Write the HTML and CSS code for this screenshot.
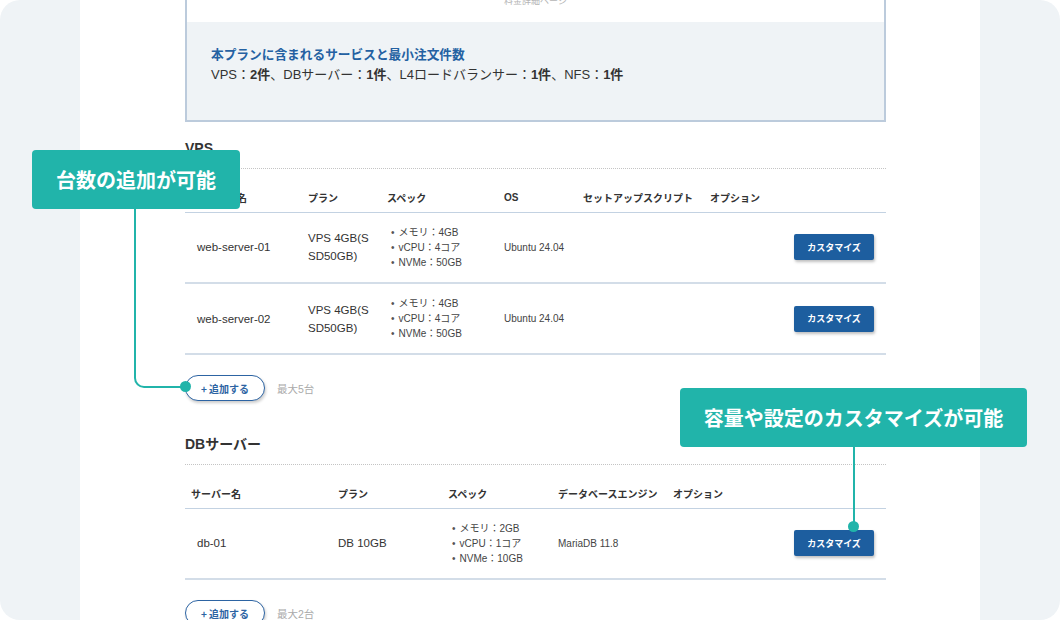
FILE: index.html
```html
<!DOCTYPE html>
<html lang="ja">

<head>
  <meta charset="UTF-8" />
  <title>プラン構成</title>
  <meta name="viewport" content="width=device-width, initial-scale=1.0">
  <link rel="stylesheet" href="styles.css">
</head>

<body>
  <div class="frame">
    <div class="panel">

      <!-- Plan summary -->
      <div class="plan-box">
        <div class="plan-top">料金詳細ページ</div>
        <div class="plan-body">
          <p class="plan-title">本プランに含まれるサービスと最小注文件数</p>
          <p class="plan-text">VPS：<b>2件</b>、DBサーバー：<b>1件</b>、L4ロードバランサー：<b>1件</b>、NFS：<b>1件</b></p>
        </div>
      </div>

      <!-- VPS -->
      <h2 class="section-title">VPS</h2>
      <table class="server-table">
        <colgroup>
          <col style="width:111px">
          <col style="width:79px">
          <col style="width:117px">
          <col style="width:79px">
          <col style="width:127px">
          <col style="width:188px">
        </colgroup>
        <thead>
          <tr>
            <th>サーバー名</th>
            <th class="narrow">プラン</th>
            <th>スペック</th>
            <th>OS</th>
            <th>セットアップスクリプト</th>
            <th>オプション</th>
          </tr>
        </thead>
        <tbody>
          <tr>
            <td class="name">web-server-01</td>
            <td class="name narrow">VPS 4GB(SSD50GB)</td>
            <td>
              <ul class="spec">
                <li>メモリ：4GB</li>
                <li>vCPU：4コア</li>
                <li>NVMe：50GB</li>
              </ul>
            </td>
            <td class="small">Ubuntu 24.04</td>
            <td></td>
            <td class="action"><button class="custom-btn">カスタマイズ</button></td>
          </tr>
          <tr>
            <td class="name">web-server-02</td>
            <td class="name narrow">VPS 4GB(SSD50GB)</td>
            <td>
              <ul class="spec">
                <li>メモリ：4GB</li>
                <li>vCPU：4コア</li>
                <li>NVMe：50GB</li>
              </ul>
            </td>
            <td class="small">Ubuntu 24.04</td>
            <td></td>
            <td class="action"><button class="custom-btn">カスタマイズ</button></td>
          </tr>
        </tbody>
      </table>
      <div class="add-row">
        <button class="add-btn">+ 追加する</button>
        <span class="limit">最大5台</span>
      </div>

      <!-- DB -->
      <h2 class="section-title db">DBサーバー</h2>
      <table class="server-table">
        <colgroup>
          <col style="width:141px">
          <col style="width:110px">
          <col style="width:110px">
          <col style="width:115px">
          <col style="width:225px">
        </colgroup>
        <thead>
          <tr>
            <th class="first">サーバー名</th>
            <th>プラン</th>
            <th>スペック</th>
            <th>データベースエンジン</th>
            <th>オプション</th>
          </tr>
        </thead>
        <tbody>
          <tr>
            <td class="name">db-01</td>
            <td class="name">DB 10GB</td>
            <td>
              <ul class="spec">
                <li>メモリ：2GB</li>
                <li>vCPU：1コア</li>
                <li>NVMe：10GB</li>
              </ul>
            </td>
            <td class="small">MariaDB 11.8</td>
            <td class="action"><button class="custom-btn">カスタマイズ</button></td>
          </tr>
        </tbody>
      </table>
      <div class="add-row">
        <button class="add-btn">+ 追加する</button>
        <span class="limit">最大2台</span>
      </div>
    </div>

    <!-- Callouts -->
    <div class="callout callout-add">台数の追加が可能</div>
    <div class="line line-add"></div>
    <div class="dot dot-add"></div>

    <div class="callout callout-custom">容量や設定のカスタマイズが可能</div>
    <div class="line line-custom"></div>
    <div class="dot dot-custom"></div>
  </div>
</body>

</html>
```

FILE: styles.css
```css
* {
  margin: 0;
  padding: 0;
  box-sizing: border-box;
}

body {
  background: #fff;
  font-family: 'Liberation Sans', 'Noto Sans CJK JP', sans-serif;
  color: #333;
}

.frame {
  position: relative;
  width: 1060px;
  height: 620px;
  background: #eff3f6;
  border-radius: 20px;
  overflow: hidden;
  display: flex;
  justify-content: center;
}

.panel {
  width: 900px;
  background: #fff;
  padding: 0 94px 0 105px;
}

/* === Plan summary === */
.plan-box {
  margin-top: -42px;
  border: 2px solid #bccbdc;
  border-top: none;
}

.plan-top {
  height: 64px;
  padding-top: 38px;
  text-align: center;
  font-size: 9px;
  line-height: 10px;
  color: #b5b5b5;
}

.plan-body {
  background: #eff3f6;
  padding: 25px 24px 37px;
}

.plan-title {
  font-size: 12.7px;
  line-height: 16px;
  font-weight: bold;
  color: #2461a2;
}

.plan-text {
  margin-top: 4px;
  font-size: 13px;
  line-height: 16px;
  color: #333;
}

/* === Sections === */
.section-title {
  margin-top: 16px;
  font-size: 14px;
  line-height: 20px;
  padding-bottom: 10px;
  border-bottom: 1px dotted #c4c4c4;
  color: #333;
}

.section-title.db {
  margin-top: 33px;
}

.server-table {
  width: 701px;
  margin-top: 14px;
  table-layout: fixed;
  border-collapse: collapse;
}

.server-table th {
  height: 29px;
  text-align: left;
  font-size: 10px;
  font-weight: bold;
  color: #333;
  padding: 0 4px 0 12px;
  border-bottom: 1px solid #c3d2e2;
  white-space: nowrap;
}

.server-table th.first {
  padding-left: 6px;
}

.server-table td {
  height: 71px;
  padding: 0 4px 0 12px;
  border-bottom: 2px solid #d3dde8;
  vertical-align: middle;
}

.name {
  font-size: 11.5px;
  line-height: 18px;
  color: #333;
}

.server-table td.narrow {
  word-break: break-all;
  padding-right: 0;
}

.small {
  font-size: 10px;
  color: #444;
}

.spec {
  list-style: none;
  padding-left: 4px;
  font-size: 10px;
  line-height: 15px;
  color: #444;
}

.spec li::before {
  content: "•";
  margin-right: 4px;
  color: #555;
}

.action {
  text-align: right;
  padding-right: 12px !important;
}

.custom-btn {
  width: 80px;
  height: 26px;
  border: none;
  border-radius: 2px;
  background: #1d5e9f;
  color: #fff;
  font-family: 'Noto Sans CJK JP', sans-serif;
  font-size: 9px;
  font-weight: bold;
  box-shadow: 1px 2px 3px rgba(0, 0, 0, 0.25);
}

.add-row {
  margin-top: 20px;
  display: flex;
  align-items: center;
  gap: 12px;
}

.add-btn {
  width: 80px;
  height: 26px;
  background: #fff;
  border: 1.5px solid #2d64a3;
  border-radius: 13px;
  color: #2d64a3;
  font-family: 'Noto Sans CJK JP', sans-serif;
  font-size: 10px;
  font-weight: bold;
  box-shadow: 1px 2px 3px rgba(0, 0, 0, 0.2);
}

.limit {
  font-size: 10.5px;
  color: #aaa;
}

/* === Callouts === */
.callout {
  position: absolute;
  height: 59px;
  background: #21b4aa;
  border-radius: 4px;
  color: #fff;
  font-family: 'Noto Sans CJK JP', sans-serif;
  font-size: 20px;
  font-weight: bold;
  display: flex;
  align-items: center;
  justify-content: center;
}

.callout-add {
  left: 32px;
  top: 150px;
  width: 208px;
}

.callout-custom {
  left: 680px;
  top: 388px;
  width: 347px;
}

.line {
  position: absolute;
  border-color: #21b4aa;
  border-style: solid;
  border-width: 0;
}

.line-add {
  left: 134px;
  top: 209px;
  width: 52px;
  height: 179px;
  border-left-width: 2px;
  border-bottom-width: 2px;
  border-bottom-left-radius: 10px;
}

.line-custom {
  left: 853px;
  top: 447px;
  width: 2px;
  height: 80px;
  border-left-width: 2px;
}

.dot {
  position: absolute;
  width: 11px;
  height: 11px;
  border-radius: 50%;
  background: #21b4aa;
}

.dot-add {
  left: 180px;
  top: 381px;
}

.dot-custom {
  left: 848px;
  top: 521px;
}
```
